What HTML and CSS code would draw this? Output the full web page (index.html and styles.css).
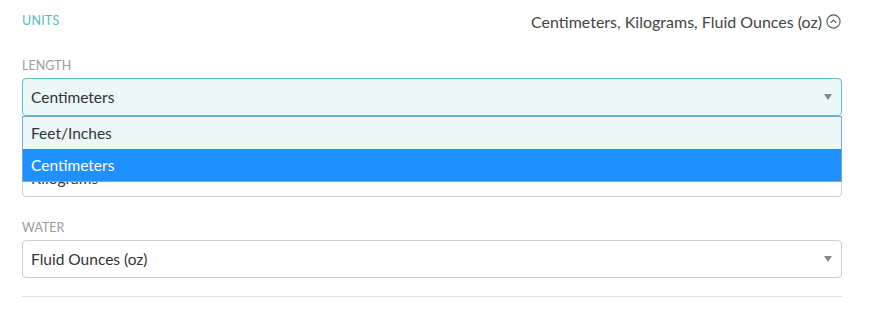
FILE: index.html
```html
<!DOCTYPE html>
<html>
<head>
<meta charset="utf-8">
<link rel="stylesheet" href="styles.css">
</head>
<body>
<div class="panel">
  <div class="header">
    <span class="title">UNITS</span>
    <span class="summary">Centimeters, Kilograms, Fluid Ounces (oz)
      <svg class="toggle" width="15" height="15" viewBox="0 0 15 15"><circle cx="7.5" cy="7.5" r="6.6" fill="none" stroke="#555" stroke-width="1.1"/><path d="M4.6 8.9 L7.5 6 L10.4 8.9" fill="none" stroke="#555" stroke-width="1.1"/></svg>
    </span>
  </div>

  <div class="field">
    <div class="label">LENGTH</div>
    <div class="select-wrap">
      <div class="select active"><span>Centimeters</span><span class="arrow"></span></div>
      <ul class="options">
        <li class="option">Feet/Inches</li>
        <li class="option selected">Centimeters</li>
      </ul>
    </div>
  </div>

  <div class="field">
    <div class="label">WEIGHT</div>
    <div class="select-wrap">
      <div class="select"><span>Kilograms</span><span class="arrow"></span></div>
    </div>
  </div>

  <div class="field">
    <div class="label">WATER</div>
    <div class="select-wrap">
      <div class="select"><span>Fluid Ounces (oz)</span><span class="arrow"></span></div>
    </div>
  </div>

  <div class="rule"></div>
</div>
</body>
</html>
```

FILE: styles.css
```css
html, body {
  margin: 0;
  padding: 0;
  background: #fff;
}
body {
  font-family: Lato, "Open Sans", sans-serif;
  color: #333;
}
.panel {
  width: 820px;
  margin-left: 22px;
}
.header {
  height: 40px;
  display: flex;
  align-items: center;
  justify-content: space-between;
}
.title {
  font-size: 12.5px;
  color: #4fc0c2;
  letter-spacing: 0.2px;
}
.summary {
  font-size: 16px;
  color: #444;
  display: flex;
  align-items: center;
  gap: 4px;
  margin-right: 1px;
  padding-top: 2px;
}
.toggle {
  display: block;
}
.field {
  margin-top: 18px;
}
.field + .field {
  margin-top: 23px;
}
.label {
  font-size: 12.5px;
  line-height: 16px;
  height: 16px;
  color: #9b9b9b;
  margin-bottom: 4px;
  padding-top: 2px;
  margin-top: -2px;
}
.select-wrap {
  position: relative;
}
.select {
  box-sizing: border-box;
  height: 38px;
  border: 1px solid #cccccc;
  border-radius: 4px;
  background: #fff;
  padding: 0 8px;
  display: flex;
  align-items: center;
  justify-content: space-between;
  font-size: 15.5px;
  color: #333;
}
.select.active {
  border-color: #5cc3c3;
  background: #ecf7f7;
}
.arrow {
  width: 0;
  height: 0;
  border-left: 4px solid transparent;
  border-right: 4px solid transparent;
  border-top: 6px solid #888;
  margin-right: 1px;
}
.options {
  position: absolute;
  top: 100%;
  left: 0;
  right: 0;
  margin: 0;
  padding: 0;
  list-style: none;
  border: 1px solid #7ba2d6;
  background: #ecf7f7;
  z-index: 2;
}
.option {
  height: 32px;
  line-height: 32px;
  padding-left: 8px;
  font-size: 15.5px;
  color: #333;
}
.option.selected {
  background: #1e90ff;
  color: #fff;
}
.rule {
  margin-top: 18px;
  height: 1px;
  background: #e0e0e6;
}
```
